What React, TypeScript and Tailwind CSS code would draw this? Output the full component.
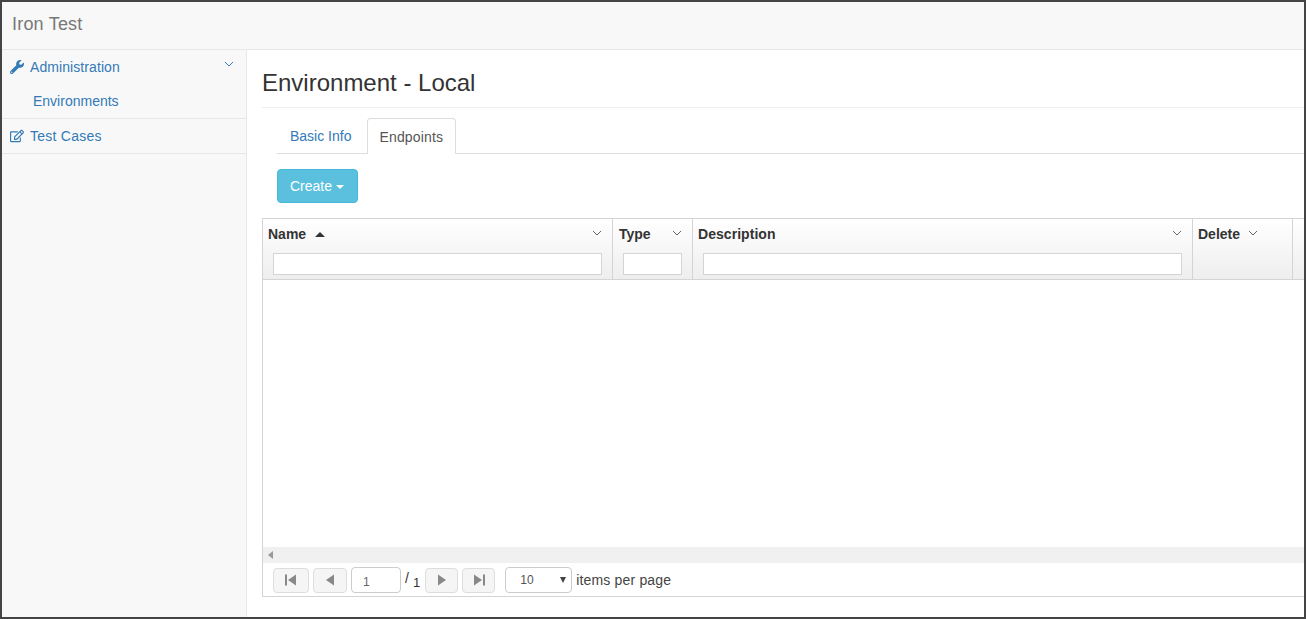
import { FaRegEdit, FaWrench } from 'react-icons/fa';

function Chevron({ className }: { className: string }) {
  return (
    <svg width="10" height="6" viewBox="0 0 10 6" className={className} fill="none" stroke="currentColor" strokeWidth="1">
      <path d="M1 1l4 4 4-4" />
    </svg>
  );
}

function PagerButton({ width, d, bar }: { width: string; d: string; bar?: string }) {
  return (
    <button className={`flex h-[25px] items-center justify-center rounded-[4px] border border-[#ddd] bg-[#f5f5f5] text-[#888] ${width}`}>
      <svg width="12" height="12" viewBox="0 0 12 12" fill="currentColor">
        {bar && <path d={bar} />}
        <path d={d} />
      </svg>
    </button>
  );
}

function HeaderCell({ title, width, filter, sort, titleClass, children }: { title: string; width: string; filter?: string; sort?: boolean; titleClass?: string; children?: React.ReactNode }) {
  return (
    <div className={`flex h-full shrink-0 flex-col border-r border-[#d4d4d4] ${width}`}>
      <div className="flex h-[34px] items-center justify-between pb-[3px] pl-[5px] pr-[10px]">
        <span className={`flex items-center text-[14px] font-bold text-[#333] ${titleClass ?? ''}`}>
          {title}
          {sort && <span className="ml-[9px] h-0 w-0 border-x-[5px] border-b-[5px] border-x-transparent border-b-[#333]" />}
        </span>
        {children ?? <Chevron className="mb-[4px] text-[#666]" />}
      </div>
      {filter && <input className={`ml-[10px] h-[22px] border border-[#d4d4d4] bg-white ${filter}`} />}
    </div>
  );
}

export default function App() {
  return (
    <div className="flex h-[619px] w-[1306px] flex-col overflow-hidden border-2 border-[#444] bg-white font-['Liberation_Sans',sans-serif] text-[14px] text-[#333]">
      <nav className="flex h-[48px] shrink-0 items-center border-b border-[#e7e7e7] bg-[#f8f8f8] pb-[2px] pl-[10px] text-[18px] tracking-[0.2px] text-[#777]">
        Iron Test
      </nav>
      <div className="flex min-h-0 flex-1">
        <aside className="w-[245px] shrink-0 border-r border-[#e7e7e7] bg-[#f8f8f8] text-[#337ab7]">
          <div className="border-b border-[#e7e7e7]">
            <div className="flex h-[34px] items-center pl-[8px] pr-[12px]">
              <FaWrench className="mr-[6px] size-[14px]" />
              <span className="tracking-[0.08px]">Administration</span>
              <Chevron className="mb-[6px] ml-auto" />
            </div>
            <div className="flex h-[34px] items-center pl-[31px]">Environments</div>
          </div>
          <div className="flex h-[35px] items-center border-b border-[#e7e7e7] pl-[8px]">
            <FaRegEdit className="mr-[6px] size-[14px]" />
            <span className="tracking-[0.25px]">Test Cases</span>
          </div>
        </aside>
        <main className="min-w-0 flex-1 pl-[15px]">
          <h1 className="flex h-[58px] items-end border-b border-[#eee] pb-[9px] text-[24px] leading-[30px] text-[#333]">Environment - Local</h1>
          <div className="ml-[15px] mt-[10px] flex h-[36px] border-b border-[#ddd]">
            <div className="flex h-[35px] items-center pl-[13px] pr-[15px] pt-[1px] text-[#337ab7]">Basic Info</div>
            <div className="ml-[1px] flex h-[36px] items-center rounded-t-[4px] border border-b-0 border-[#ddd] bg-white pl-[11px] pr-[12px] pt-[1px] tracking-[0.15px] text-[#555]">Endpoints</div>
          </div>
          <button className="ml-[15px] mt-[15px] flex h-[34px] w-[81px] items-center justify-center rounded-[4px] border border-[#46b8da] bg-[#5bc0de] pr-[1px] text-white">
            Create
            <span className="ml-[4px] mt-[1px] h-0 w-0 border-x-[4px] border-t-[4px] border-x-transparent border-t-white" />
          </button>
          <div className="mt-[15px] flex h-[379px] flex-col border-y border-l border-[#d4d4d4]">
            <div className="flex h-[61px] shrink-0 border-b border-[#d4d4d4] bg-gradient-to-b from-white to-[#eeeeee]">
              <HeaderCell title="Name" width="w-[350px]" filter="w-[329px]" sort />
              <HeaderCell title="Type" width="w-[80px]" filter="w-[59px]" titleClass="ml-[1px]" />
              <HeaderCell title="Description" width="w-[500px]" filter="w-[479px]" titleClass="tracking-[0.05px]" />
              <HeaderCell title="Delete" width="w-[100px]">
                <Chevron className="mb-[4px] mr-[24px] text-[#666]" />
              </HeaderCell>
            </div>
            <div className="flex-1" />
            <div className="flex h-[16px] shrink-0 items-center bg-[#f0f0f0] pl-[5px]">
              <span className="h-0 w-0 border-y-[4px] border-r-[5px] border-y-transparent border-r-[#999]" />
            </div>
            <div className="flex h-[33px] shrink-0 items-center pl-[10px] pt-[1px] text-[#333]">
              <PagerButton width="w-[36px]" d="M11 .5v11L3 6z" bar="M0 .5h2v11H0z" />
              <PagerButton width="ml-[4px] w-[34px]" d="M10 .5v11L2 6z" />
              <div className="ml-[4px] flex h-[26px] w-[50px] items-center rounded-[4px] border border-[#ccc] pl-[11px] pt-[3px] text-[12px] text-[#666]">1</div>
              <span className="mb-[3px] ml-[4px] text-[14px]">/</span>
              <span className="ml-[4px] mt-[5px] text-[13px]">1</span>
              <PagerButton width="ml-[5px] w-[33px]" d="M2 .5v11L10 6z" />
              <PagerButton width="ml-[4px] w-[33px]" d="M1 .5v11L9 6z" bar="M10 .5h2v11h-2z" />
              <div className="ml-[10px] flex h-[26px] w-[67px] items-center justify-between rounded-[4px] border border-[#ccc] pl-[14px] pr-[5px] text-[12px] tracking-[0.2px] text-[#555]">
                10
                <span className="h-0 w-0 border-x-[3.5px] border-t-[6px] border-x-transparent border-t-[#444]" />
              </div>
              <span className="ml-[4px] tracking-[0.18px] text-[#444]">items per page</span>
            </div>
          </div>
        </main>
      </div>
    </div>
  );
}
